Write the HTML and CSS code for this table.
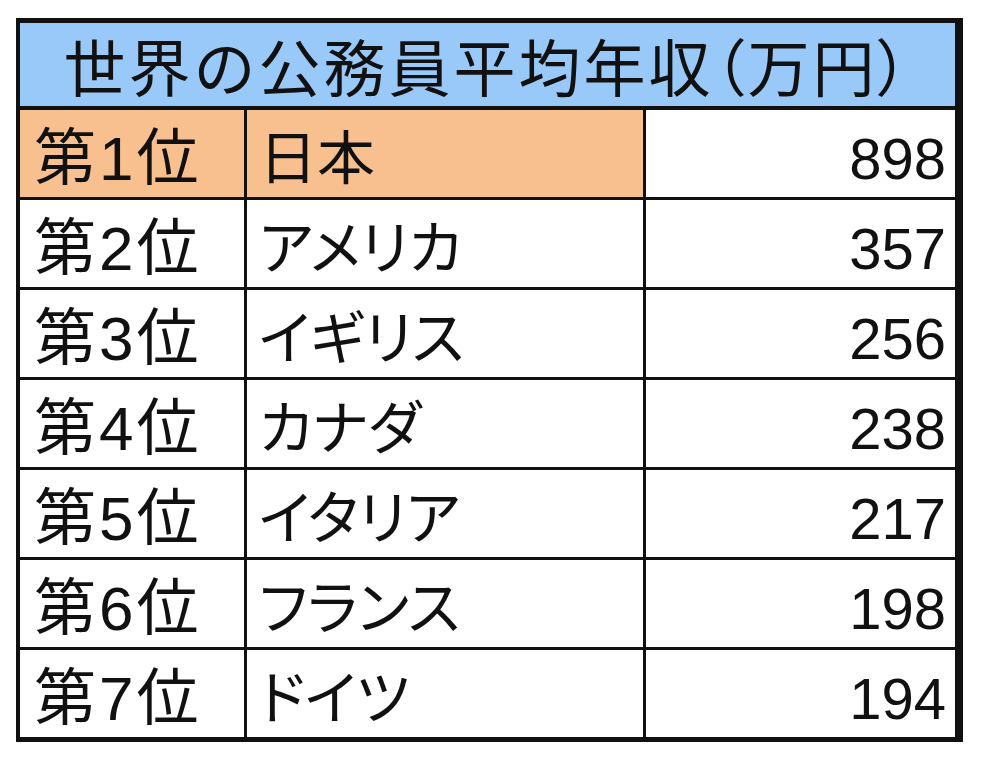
FILE: index.html
```html
<!DOCTYPE html>
<html lang="ja">
<head>
<meta charset="utf-8">
<title>世界の公務員平均年収</title>
<link rel="stylesheet" href="styles.css">
</head>
<body>
<div class="table">
  <div class="title">世界の公務員平均年収<span class="paren">（</span>万円<span class="paren">）</span></div>
  <div class="cell rank top">第1位</div><div class="cell country top">日本</div><div class="cell num">898</div>
  <div class="cell rank">第2位</div><div class="cell country">アメリカ</div><div class="cell num">357</div>
  <div class="cell rank">第3位</div><div class="cell country">イギリス</div><div class="cell num">256</div>
  <div class="cell rank">第4位</div><div class="cell country">カナダ</div><div class="cell num">238</div>
  <div class="cell rank">第5位</div><div class="cell country">イタリア</div><div class="cell num">217</div>
  <div class="cell rank">第6位</div><div class="cell country">フランス</div><div class="cell num">198</div>
  <div class="cell rank">第7位</div><div class="cell country">ドイツ</div><div class="cell num">194</div>
</div>
</body>
</html>
```
FILE: styles.css
```css
html, body {
  margin: 0;
  padding: 0;
  background: #ffffff;
}
body {
  padding: 18px 0 0 16px;
  font-family: "Liberation Sans", "Noto Sans CJK JP", sans-serif;
  color: #111111;
}
.table {
  display: grid;
  grid-template-columns: 224px 396px 309px;
  grid-template-rows: 84px repeat(7, 87px);
  column-gap: 3px;
  row-gap: 3px;
  width: 938px;
  background: #111111;
  border-top: 5px solid #111111;
  border-left: 4px solid #111111;
  border-right: 5px solid #111111;
  border-bottom: 5px solid #111111;
}
.title {
  grid-column: 1 / 4;
  margin-bottom: 1px;
  background: #99c9f8;
  font-family: "Noto Sans CJK JP", sans-serif;
  font-size: 62px;
  letter-spacing: 3px;
  line-height: 1;
  display: flex;
  align-items: center;
  justify-content: center;
  padding-top: 0;
}
.paren {
  font-feature-settings: "palt";
}
.cell {
  background: #ffffff;
  font-size: 58px;
  line-height: 1;
  display: flex;
  align-items: center;
  padding-top: 10px;
  box-sizing: border-box;
  white-space: nowrap;
}
.cell.top {
  background: #f9c08f;
}
.rank {
  padding-left: 14px;
  font-size: 62px;
  letter-spacing: 3px;
}
.country {
  padding-left: 12px;
  font-feature-settings: "palt";
}
.num {
  justify-content: flex-end;
  padding-right: 9px;
}
```
